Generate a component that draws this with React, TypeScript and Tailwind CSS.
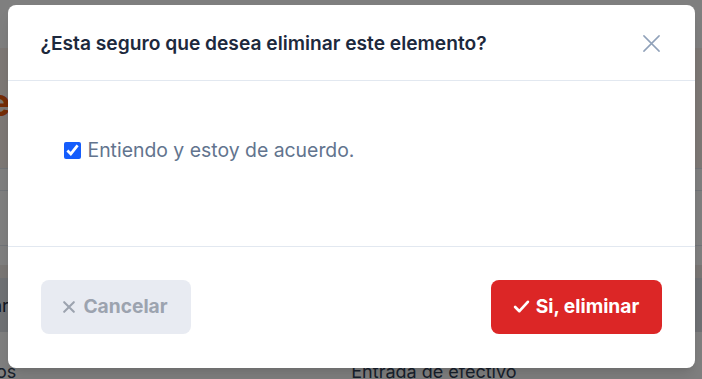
import React from "react";

function XIcon({ className, strokeWidth = 1.6 }: { className?: string; strokeWidth?: number }) {
  return (
    <svg viewBox="0 0 20 20" fill="none" stroke="currentColor" strokeWidth={strokeWidth} strokeLinecap="round" className={className}>
      <path d="M2 2 L18 18 M18 2 L2 18" />
    </svg>
  );
}

function CheckIcon({ className }: { className?: string }) {
  return (
    <svg viewBox="0 0 20 20" fill="none" stroke="currentColor" strokeWidth={3.2} strokeLinecap="round" strokeLinejoin="round" className={className}>
      <path d="M2.5 10.5 L7.5 15.5 L17.5 4.5" />
    </svg>
  );
}

export default function App() {
  return (
    <div className="relative w-[702px] h-[379px] overflow-hidden bg-white font-['Inter','Noto_Sans',sans-serif]">
      {/* background page */}
      <div className="flex flex-col">
        <div className="h-[48px] bg-white" />
        <div className="h-[120px] bg-[#faf1eb] flex items-center">
          <span className="ml-[-12px] mt-[-12px] text-[38px] leading-none font-bold text-[#ea580c]">e</span>
        </div>
        <div className="h-[22px] bg-white border-t border-slate-200" />
        <div className="h-[55px] bg-white border-t border-slate-200" />
        <div className="h-[20px] bg-white border-t border-slate-200" />
        <div className="h-[13px] bg-[#f3ece8]" />
        <div className="h-[54px] bg-[#dfe2e8] flex items-center">
          <span className="ml-[-8px] text-[18px] text-slate-800">ar</span>
        </div>
        <div className="h-[47px] bg-white relative flex items-end">
          <span className="ml-[-4px] mb-[-6px] text-[18px] text-slate-700">os</span>
          <span className="ml-[335px] mb-[-6px] text-[18px] text-slate-700">Entrada de efectivo</span>
        </div>
      </div>

      {/* overlay */}
      <div className="absolute inset-0 bg-black/50 flex justify-center pt-[5px]">
        <div className="w-[687px] h-[363px] bg-white rounded-lg shadow-lg flex flex-col">
          <div className="h-[76px] px-[33px] pt-[2px] flex items-center justify-between border-b border-slate-200">
            <h2 className="text-[19.2px] font-semibold text-slate-800">
              ¿Esta seguro que desea eliminar este elemento?
            </h2>
            <XIcon className="w-[19px] h-[19px] text-slate-400 mr-[1px]" />
          </div>
          <div className="h-[166px] px-[56px] pt-[56px] border-b border-slate-200">
            <label className="flex items-center gap-[7px] h-[27px]">
              <input type="checkbox" defaultChecked className="w-[17px] h-[17px] m-0 accent-blue-600" />
              <span className="text-[19.4px] text-slate-500">Entiendo y estoy de acuerdo.</span>
            </label>
          </div>
          <div className="flex-1 px-[33px] pb-[2px] flex items-center justify-between">
            <button className="w-[150px] h-[54px] rounded-lg bg-[#e8ebf2] flex items-center justify-center gap-[8px] text-[19.2px] font-bold text-[#9ca3af]">
              <XIcon className="w-[12px] h-[12px]" strokeWidth={3.4} />
              Cancelar
            </button>
            <button className="w-[171px] h-[54px] rounded-lg bg-[#dc2626] flex items-center justify-center gap-[6px] text-[19.2px] font-bold text-white">
              <CheckIcon className="w-[17px] h-[17px]" />
              Si, eliminar
            </button>
          </div>
        </div>
      </div>
    </div>
  );
}
